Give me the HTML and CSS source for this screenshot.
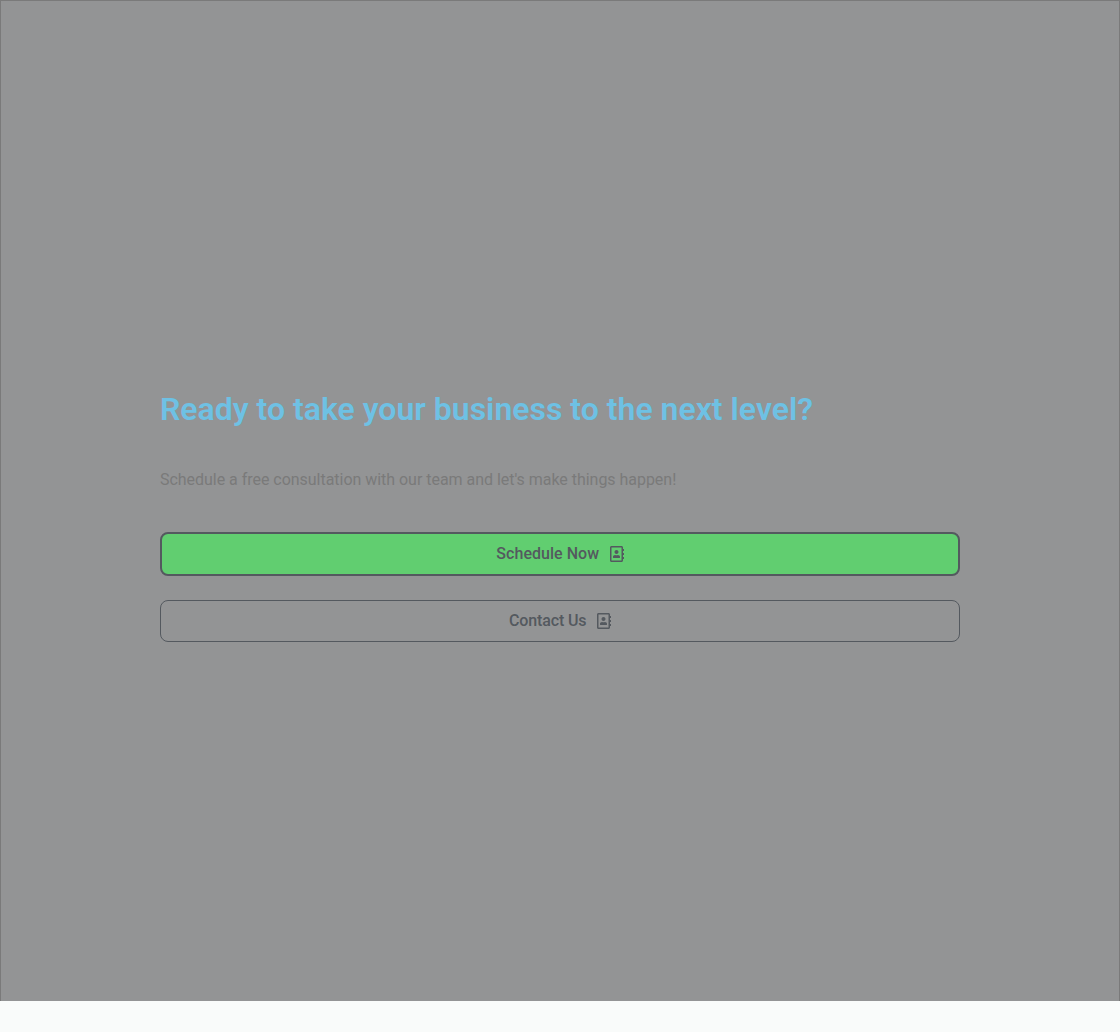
FILE: index.html
```html
<!DOCTYPE html>
<html lang="en">
<head>
<meta charset="utf-8">
<title>Ready to take your business to the next level?</title>
<link rel="stylesheet" href="styles.css">
</head>
<body>
<section class="cta">
  <div class="content">
    <h2 class="title">Ready to take your business to the next level?</h2>
    <p class="lead">Schedule a free consultation with our team and let's make things happen!</p>
    <a class="button button-primary"><span>Schedule Now</span>
      <svg class="icon" viewBox="0 0 448 512"><path fill="currentColor" d="M436 160c6.600 0 12-5.400 12-12v-40c0-6.600-5.400-12-12-12h-20V48c0-26.500-21.500-48-48-48H48C21.500 0 0 21.500 0 48v416c0 26.500 21.500 48 48 48h320c26.500 0 48-21.500 48-48v-48h20c6.600 0 12-5.400 12-12v-40c0-6.600-5.400-12-12-12h-20v-64h20c6.600 0 12-5.400 12-12v-40c0-6.600-5.400-12-12-12h-20v-64h20zm-68 304H48V48h320v416zM208 256c35.300 0 64-28.700 64-64s-28.700-64-64-64-64 28.700-64 64 28.700 64 64 64zm-89.600 128h179.200c12.400 0 22.400-8.600 22.400-19.200v-19.200c0-31.800-30.100-57.600-67.200-57.600-10.800 0-18.700 8-44.800 8-26.900 0-33.400-8-44.800-8-37.100 0-67.200 25.800-67.200 57.600v19.200c0 10.600 10 19.200 22.400 19.200z"/></svg>
    </a>
    <a class="button button-outline"><span>Contact Us</span>
      <svg class="icon" viewBox="0 0 448 512"><path fill="currentColor" d="M436 160c6.600 0 12-5.400 12-12v-40c0-6.600-5.400-12-12-12h-20V48c0-26.500-21.500-48-48-48H48C21.500 0 0 21.500 0 48v416c0 26.500 21.500 48 48 48h320c26.500 0 48-21.500 48-48v-48h20c6.600 0 12-5.400 12-12v-40c0-6.600-5.400-12-12-12h-20v-64h20c6.600 0 12-5.400 12-12v-40c0-6.600-5.400-12-12-12h-20v-64h20zm-68 304H48V48h320v416zM208 256c35.300 0 64-28.700 64-64s-28.700-64-64-64-64 28.700-64 64 28.700 64 64 64zm-89.600 128h179.200c12.400 0 22.400-8.600 22.400-19.200v-19.200c0-31.800-30.100-57.600-67.200-57.600-10.800 0-18.700 8-44.800 8-26.900 0-33.400-8-44.800-8-37.100 0-67.200 25.800-67.200 57.600v19.200c0 10.600 10 19.200 22.400 19.200z"/></svg>
    </a>
  </div>
</section>
</body>
</html>
```
FILE: styles.css
```css
* { box-sizing: border-box; }
body { margin: 0; height: 1032px; background: #f9fbfa; font-family: Roboto, sans-serif; }
.cta { height: 1001px; padding-top: 392px; background: #939495; border: 1px solid #7a7a7a; border-bottom: 0; }
.content { width: 800px; margin: 0 auto; display: flex; flex-direction: column; }
.title { margin: 0; font-size: 32px; font-weight: 600; line-height: 32px; color: #6ec1e4; }
.lead { margin: 43px 0 0; font-size: 16px; line-height: 24px; letter-spacing: -0.03px; color: #7a7a7a; }
.button { display: flex; align-items: center; justify-content: center; gap: 10.5px; border-radius: 8px; color: #54595f; font-size: 16px; font-weight: 500; line-height: 16px; }
.button-primary { height: 44px; margin-top: 40px; background: #61ce70; border: 2px solid #54595f; letter-spacing: 0.04px; }
.button-outline { height: 42px; margin-top: 24px; border: 1px solid #54595f; letter-spacing: -0.13px; }
.icon { width: 14px; height: 16px; }
```
